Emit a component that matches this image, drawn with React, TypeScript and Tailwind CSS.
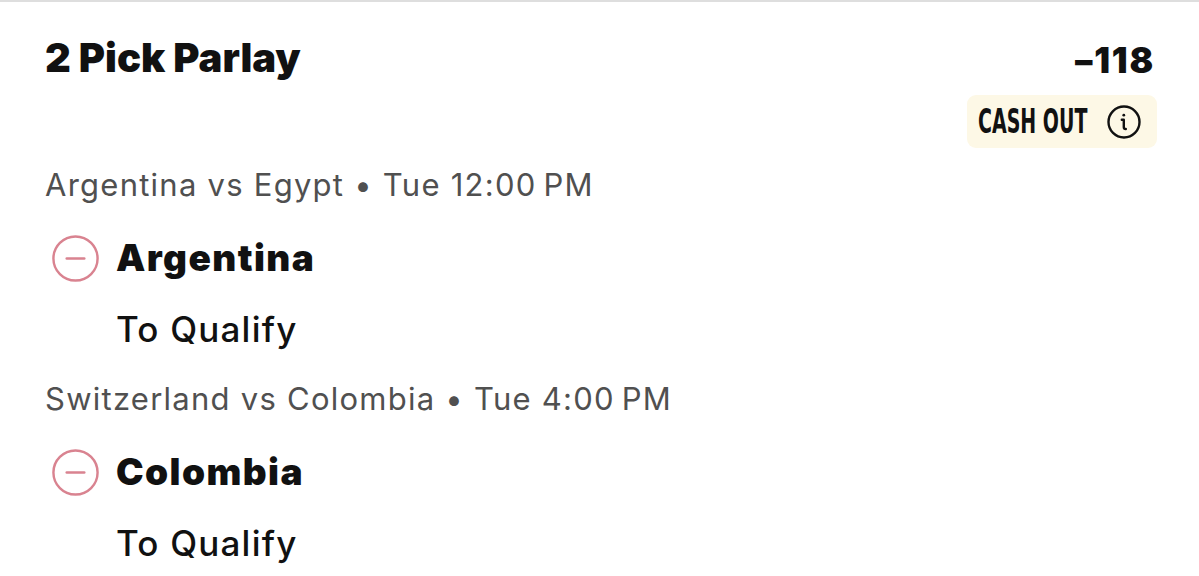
import { MinusCircle } from 'lucide-react'

type Leg = {
    matchup: string
    time: string
    pick: string
    market: string
}

const legs: Leg[] = [
    { matchup: 'Argentina vs Egypt', time: 'Tue 12:00\u2009PM', pick: 'Argentina', market: 'To Qualify' },
    { matchup: 'Switzerland vs Colombia', time: 'Tue 4:00\u2009PM', pick: 'Colombia', market: 'To Qualify' },
]

function InfoIcon() {
    return (
        <svg width="36" height="36" viewBox="0 0 36 36" fill="none" stroke="#111" strokeWidth="2.4" strokeLinecap="round">
            <circle cx="18" cy="18" r="15.5" />
            <circle cx="17.8" cy="11.2" r="1.4" fill="#111" stroke="none" />
            <path d="M15.8 15.8 H17.8 V23.2 Q17.8 25 19.8 25" strokeLinejoin="round" />
        </svg>
    )
}

function LegRow({ leg }: { leg: Leg }) {
    return (
        <div className="flex flex-col">
            <div className="text-[31px] leading-[72px] tracking-[1.25px] text-[#505050] whitespace-nowrap">
                {leg.matchup} • {leg.time}
            </div>
            <div className="flex items-center h-[74px]">
                <MinusCircle className="ml-[4px] w-[53px] h-[53px] text-[#d98390] shrink-0" strokeWidth={1.1} />
                <span className="ml-[14px] text-[37px] font-black tracking-[1.4px] text-[#111] leading-[74px]">{leg.pick}</span>
            </div>
            <div className="pl-[71px] text-[35px] font-medium tracking-[1.2px] text-[#111] leading-[68px]">{leg.market}</div>
        </div>
    )
}

export default function App() {
    return (
        <div className="w-[1199px] h-[576px] overflow-hidden bg-white border-t-2 border-[#dedede] font-['Inter',sans-serif]">
            <div className="pl-[45px] pr-[44px]">
                {/* Header */}
                <div className="flex justify-between items-start pt-[32px]">
                    <h1 className="text-[40px] leading-[48px] font-black text-[#111] tracking-[0px]">2 Pick Parlay</h1>
                    <div className="flex flex-col items-end">
                        <span className="text-[35px] leading-[52px] font-black tracking-[1.8px] text-[#111]">–118</span>
                        <div className="mt-[9px] -mr-[2px] h-[53px] flex items-center bg-[#fdf8e6] rounded-[9px] pl-[11px] pr-[15px]">
                            <div className="w-[114px] overflow-visible">
                                <span className="inline-block origin-left scale-x-[0.64] whitespace-nowrap font-['DejaVu_Sans_Condensed','DejaVu_Sans',sans-serif] font-bold text-[33px] leading-[40px] text-[#111]">
                                    CASH OUT
                                </span>
                            </div>
                            <div className="ml-[14px] flex items-center">
                                <InfoIcon />
                            </div>
                        </div>
                    </div>
                </div>

                {/* Legs */}
                <div className="mt-[1px] flex flex-col">
                    {legs.map((leg) => (
                        <LegRow key={leg.pick} leg={leg} />
                    ))}
                </div>
            </div>
        </div>
    )
}
